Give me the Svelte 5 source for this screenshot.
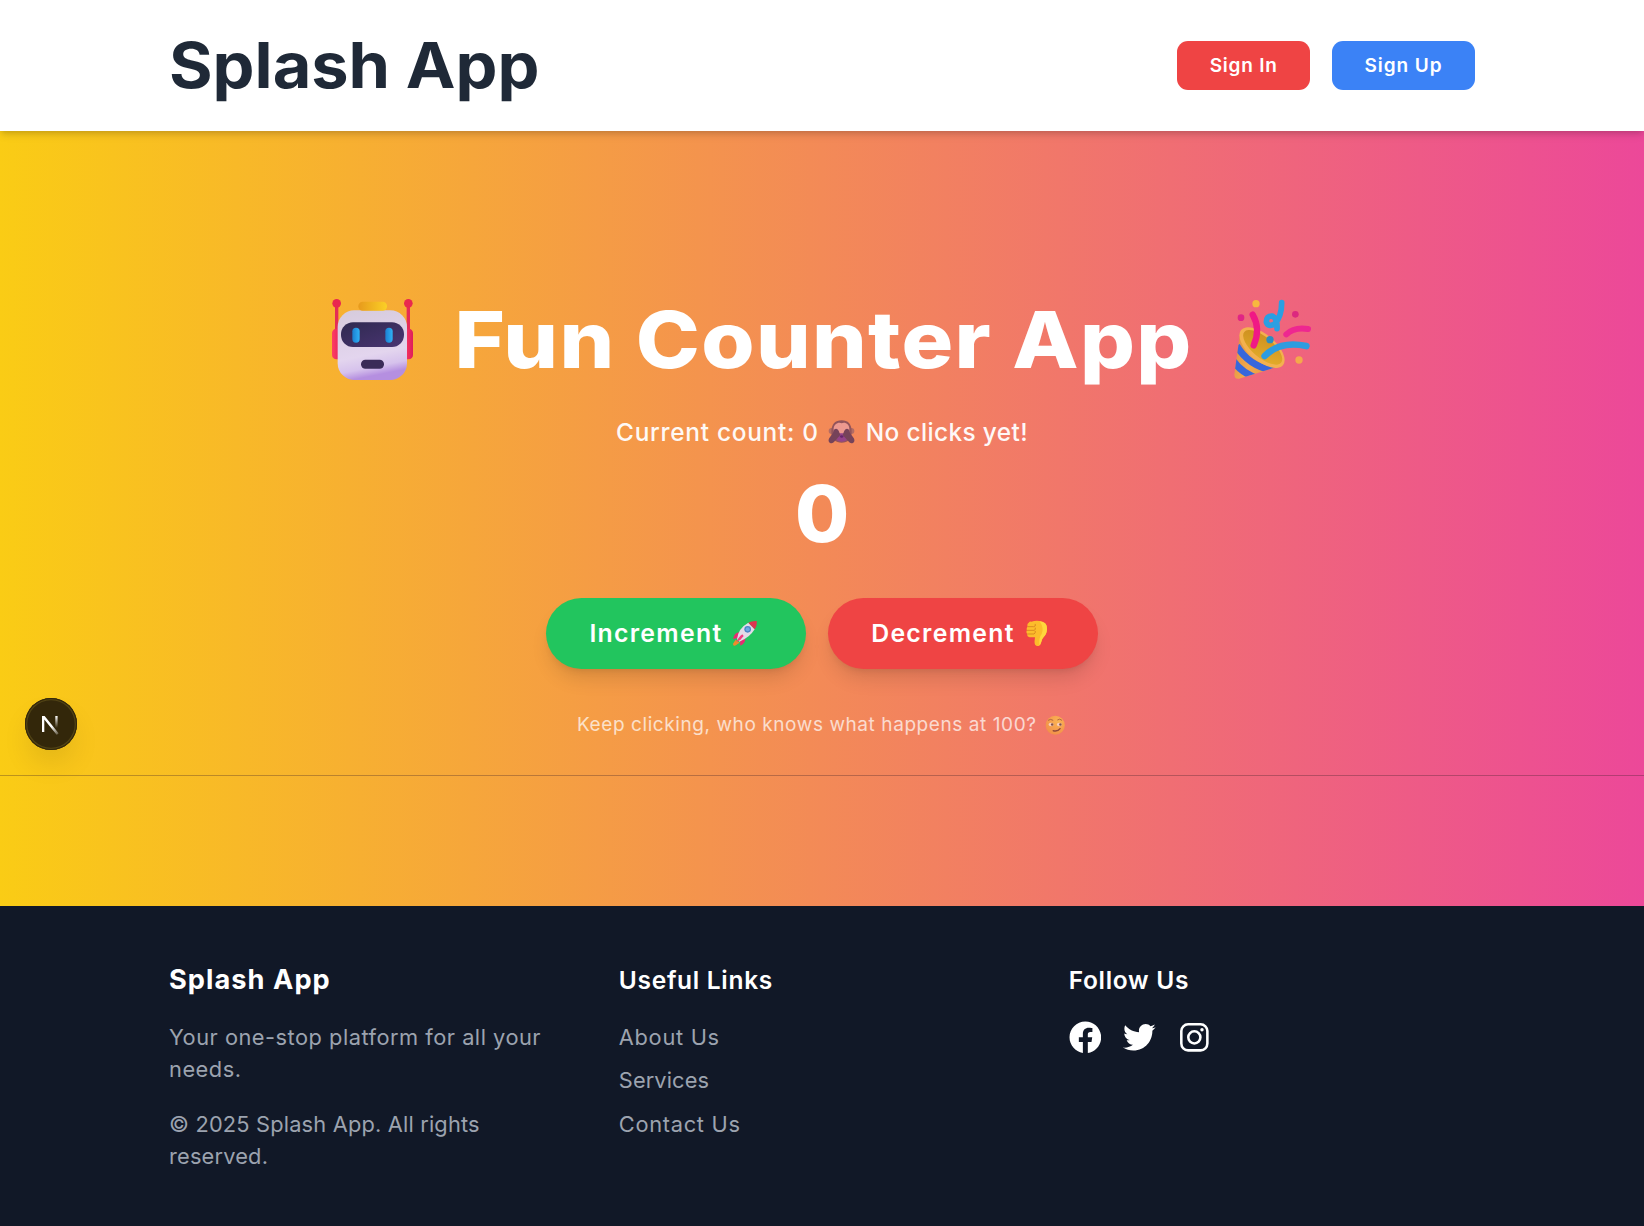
<script>
  let count = $state(0);
  const links = ['About Us', 'Services', 'Contact Us'];
</script>

<div class="page">
  <header>
    <div class="container bar">
      <div class="logo"><span>Splash App</span></div>
      <nav>
        <button class="sign in">Sign In</button>
        <button class="sign up">Sign Up</button>
      </nav>
    </div>
  </header>

  <main>
    <h1>
      <svg class="robot" viewBox="36 42 243 243" aria-label="robot">
        <defs>
          <linearGradient id="face" x1="0" y1="0" x2="0.2" y2="1">
            <stop offset="0" stop-color="#d6cbdc" /><stop offset="0.7" stop-color="#e3d5ee" /><stop offset="0.88" stop-color="#d6c2ec" /><stop offset="1" stop-color="#b58fe0" />
          </linearGradient>
          <linearGradient id="visor" x1="0" y1="0" x2="1" y2="1">
            <stop offset="0" stop-color="#2f2950" /><stop offset="1" stop-color="#4a3572" />
          </linearGradient>
          <linearGradient id="eye" x1="0" y1="0" x2="1" y2="0">
            <stop offset="0" stop-color="#1c7fd0" /><stop offset="1" stop-color="#2fb2f6" />
          </linearGradient>
          <linearGradient id="cap" x1="0" y1="0" x2="1" y2="0">
            <stop offset="0" stop-color="#e79a1c" /><stop offset="1" stop-color="#fbd026" />
          </linearGradient>
          <linearGradient id="ear" x1="0" y1="0" x2="1" y2="0">
            <stop offset="0" stop-color="#ff3f62" /><stop offset="1" stop-color="#de1d5b" />
          </linearGradient>
        </defs>
        <rect x="45" y="58" width="10" height="80" rx="3" fill="#e52c55" />
        <rect x="260" y="58" width="10" height="80" rx="3" fill="#e52c55" />
        <circle cx="50" cy="55" r="13" fill="#e9284f" />
        <circle cx="265" cy="55" r="13" fill="#e9284f" />
        <rect x="36" y="131" width="30" height="92" rx="13" fill="url(#ear)" />
        <rect x="249" y="131" width="30" height="92" rx="13" fill="url(#ear)" />
        <rect x="53" y="76" width="208" height="209" rx="50" fill="url(#face)" />
        <rect x="115" y="50" width="86" height="27" rx="13" fill="url(#cap)" />
        <rect x="63" y="112" width="189" height="74" rx="36" fill="url(#visor)" />
        <rect x="97" y="128" width="22" height="45" rx="11" fill="url(#eye)" />
        <rect x="196" y="128" width="22" height="45" rx="11" fill="url(#eye)" />
        <rect x="123" y="224" width="69" height="27" rx="13" fill="#3a2b58" />
      </svg>
      <span class="headline"><span>Fun Counter App</span></span>
      <svg class="party" viewBox="52 40 233 242" aria-label="party popper">
        <defs>
          <linearGradient id="cone" x1="0" y1="0" x2="1" y2="0.4">
            <stop offset="0" stop-color="#dc8a3e" /><stop offset="0.5" stop-color="#f2a94d" /><stop offset="1" stop-color="#e59a3c" />
          </linearGradient>
          <linearGradient id="mouth" x1="0" y1="0" x2="1" y2="1">
            <stop offset="0" stop-color="#c98b1d" /><stop offset="1" stop-color="#e7b02c" />
          </linearGradient>
          <clipPath id="coneclip"><path d="M70 145 L53 266 Q53 284 72 278 L198 238 L140 180Z" /></clipPath>
        </defs>
        <path d="M70 145 L53 266 Q53 284 72 278 L198 238 L140 180Z" fill="url(#cone)" />
        <g clip-path="url(#coneclip)" fill="none" stroke="#3767dc" stroke-width="21">
          <path d="M60 180 Q96 242 175 256" />
          <path d="M50 226 Q74 262 130 282" />
        </g>
        <ellipse cx="136" cy="186" rx="82" ry="40" transform="rotate(40 136 186)" fill="#f3b14f" />
        <ellipse cx="138" cy="185" rx="72" ry="31" transform="rotate(40 138 185)" fill="url(#mouth)" />
        <path d="M108 87 Q133 130 111 179" fill="none" stroke="#f01885" stroke-width="19" stroke-linecap="round" />
        <path d="M144 211 Q190 164 269 181" fill="none" stroke="#2d9ce0" stroke-width="20" stroke-linecap="round" />
        <path d="M209 146 Q233 123 274 130" fill="none" stroke="#ee2790" stroke-width="18" stroke-linecap="round" />
        <path d="M195 51 Q195 92 174 115 Q155 126 149 109 Q149 90 167 91 Q183 99 181 129" fill="none" stroke="#2b9fe2" stroke-width="17" stroke-linecap="round" stroke-linejoin="round" />
        <circle cx="118" cy="54" r="11" fill="#f7b83f" />
        <circle cx="73" cy="96" r="10" fill="#e02585" />
        <circle cx="236" cy="86" r="10" fill="#dc287f" />
        <circle cx="160" cy="162" r="11" fill="#2c8dc0" />
        <circle cx="247" cy="223" r="11" fill="#f4a94b" />
      </svg>
    </h1>

    <p class="status">
      <span class="current">Current count: {count}</span>
      <svg class="monkey" viewBox="0 0 81 72" aria-label="see-no-evil monkey">
        <circle cx="11" cy="33" r="9" fill="#b06a64" /><circle cx="70" cy="33" r="9" fill="#b06a64" />
        <path d="M10 36 C10 12 22 1 41 1 S71 12 71 36 C71 58 59 68 41 68 S10 58 10 36Z" fill="#8e525b" />
        <path d="M17 31 C15 8 36 5 41 10 C47 5 66 8 64 31 Q66 56 41 56 Q16 56 17 31Z" fill="#ec9a92" />
        <path d="M24 40 H57 L56 61 Q41 69 26 61Z" fill="#91418c" />
        <path d="M35 48 Q41 44 47 48 L45 52 Q41 55 37 52Z" fill="#5f226d" />
        <path d="M18 29 Q26 22 32 32 L37 45 L20 64 Q13 73 5 68 Q-1 63 4 54 L15 39Z" fill="#70405a" />
        <path d="M63 29 Q55 22 49 32 L44 45 L61 64 Q68 73 76 68 Q82 63 77 54 L66 39Z" fill="#70405a" />
      </svg>
      <span class="message">No clicks yet!</span>
    </p>

    <div class="count">{count}</div>

    <div class="actions">
      <button class="pill inc" onclick={() => count++}>
        <span>Increment</span>
        <svg viewBox="0 0 81 81" aria-label="rocket">
          <path d="M14 59 L6 71 Q5 78 12 77 L26 68Z" fill="#f08a2c" />
          <path d="M25 37 Q10 38 6 57 L22 54Z" fill="#e92a72" />
          <path d="M43 56 Q43 70 28 77 L27 59Z" fill="#e92a72" />
          <path d="M18 58 Q21 25 52 8 L71 28 Q56 53 25 65Z" fill="#e3dbe8" />
          <path d="M52 8 Q63 2 77 3 Q79 17 71 28Z" fill="#dd3550" />
          <circle cx="50" cy="28" r="10" fill="#4a86c6" /><circle cx="50" cy="28" r="6" fill="#6da9e2" />
          <path d="M34 43 Q24 49 16 66 Q31 60 38 48Z" fill="#f23d82" />
        </svg>
      </button>
      <button class="pill dec" onclick={() => count--}>
        <span>Decrement</span>
        <svg viewBox="0 0 81 81" aria-label="thumbs down">
          <path d="M25 5 Q42 -1 58 5 Q73 9 72 28 Q71 43 62 51 Q56 57 54 68 Q51 80 42 78 Q33 76 35 61 L36 52 H20 Q11 50 13 42 Q8 37 12 31 Q9 25 14 20 Q11 12 17 8 Q20 4 25 5Z" fill="#fcbc2b" />
          <path d="M50 4 Q73 6 72 28 Q71 43 62 51 Q56 57 54 68 Q52 74 49 76 Q47 53 56 42 Q64 25 50 4Z" fill="#ffd63d" />
          <path d="M16 20 H32 Q39 20 37 13 M13 31 H33 Q39 30 37 24 M14 42 H33 Q38 40 37 34" fill="none" stroke="#dc8b20" stroke-width="3" stroke-linecap="round" />
        </svg>
      </button>
    </div>

    <p class="note">
      <span>Keep clicking, who knows what happens at 100?</span>
      <svg viewBox="0 0 60 60" aria-label="smirking face">
        <defs>
          <radialGradient id="smirk" cx="0.65" cy="0.3" r="0.75">
            <stop offset="0" stop-color="#ffcf4b" /><stop offset="1" stop-color="#f39a3c" />
          </radialGradient>
        </defs>
        <circle cx="30" cy="30" r="28" fill="url(#smirk)" />
        <ellipse cx="18" cy="28" rx="7.5" ry="5" fill="#fff2dc" /><ellipse cx="42" cy="28" rx="7.5" ry="5" fill="#fff2dc" />
        <circle cx="21" cy="28" r="3.6" fill="#5c4539" /><circle cx="45" cy="28" r="3.6" fill="#5c4539" />
        <path d="M10 15 Q16 10 23 15 M37 14 Q43 9 49 15" fill="none" stroke="#8b532c" stroke-width="2.6" stroke-linecap="round" />
        <path d="M24 46 Q38 49 44 40" fill="none" stroke="#6b3424" stroke-width="4" stroke-linecap="round" />
      </svg>
    </p>

    <hr />

    <div class="badge">
      <svg viewBox="0 0 52 52" aria-label="Next.js">
        <defs>
          <linearGradient id="diag" x1="27" y1="28" x2="34" y2="37" gradientUnits="userSpaceOnUse">
            <stop offset="0" stop-color="#fff" /><stop offset="1" stop-color="#fff" stop-opacity="0.15" />
          </linearGradient>
          <linearGradient id="stem" x1="0" y1="18" x2="0" y2="30" gradientUnits="userSpaceOnUse">
            <stop offset="0" stop-color="#fff" /><stop offset="1" stop-color="#fff" stop-opacity="0" />
          </linearGradient>
        </defs>
        <path d="M17 18 H19.6 L33.6 35.2 Q32.8 36.2 31.6 36.8 L19.3 21.6 V34 H17Z" fill="url(#diag)" />
        <rect x="30.3" y="18" width="2.3" height="12.5" fill="url(#stem)" />
      </svg>
    </div>
  </main>

  <footer>
    <div class="container columns">
      <section class="about">
        <h3>Splash App</h3>
        <p class="tagline">Your one-stop platform for all your<br />needs.</p>
        <p class="copyright">© 2025 Splash App. All rights<br />reserved.</p>
      </section>
      <section>
        <h4>Useful Links</h4>
        <ul>
          {#each links as link}
            <li>{link}</li>
          {/each}
        </ul>
      </section>
      <section>
        <h4>Follow Us</h4>
        <div class="social">
          <svg viewBox="0 0 512 512" aria-label="Facebook"><path fill="currentColor" d="M504 256C504 119 393 8 256 8S8 119 8 256c0 123.78 90.69 226.38 209.25 245V327.69h-63V256h63v-54.64c0-62.15 37-96.48 93.67-96.48 27.14 0 55.52 4.84 55.52 4.84v61h-31.28c-30.8 0-40.41 19.12-40.41 38.73V256h68.78l-11 71.69h-57.78V501C413.31 482.38 504 379.78 504 256z" /></svg>
          <svg viewBox="0 0 512 512" aria-label="Twitter"><path fill="currentColor" d="M459.37 151.716c.325 4.548.325 9.097.325 13.645 0 138.72-105.583 298.558-298.558 298.558-59.452 0-114.68-17.219-161.137-47.106 8.447.974 16.568 1.299 25.34 1.299 49.055 0 94.213-16.568 130.274-44.832-46.132-.975-84.792-31.188-98.112-72.772 6.498.974 12.995 1.624 19.818 1.624 9.421 0 18.843-1.3 27.614-3.573-48.081-9.747-84.143-51.98-84.143-102.985v-1.299c13.969 7.797 30.214 12.67 47.431 13.319-28.264-18.843-46.781-51.005-46.781-87.391 0-19.492 5.197-37.36 14.294-52.954 51.655 63.675 129.3 105.258 216.365 109.807-1.624-7.797-2.599-15.918-2.599-24.04 0-57.828 46.782-104.934 104.934-104.934 30.213 0 57.502 12.67 76.67 33.137 23.715-4.548 46.456-13.32 66.599-25.34-7.798 24.366-24.366 44.833-46.132 57.827 21.117-2.273 41.584-8.122 60.426-16.243-14.292 20.791-32.161 39.308-52.628 54.253z" /></svg>
          <svg viewBox="0 0 512 512" aria-label="Instagram">
            <rect x="52" y="52" width="408" height="408" rx="106" fill="none" stroke="currentColor" stroke-width="40" />
            <circle cx="256" cy="256" r="95" fill="none" stroke="currentColor" stroke-width="40" />
            <circle cx="375.6" cy="136.4" r="26.8" fill="currentColor" />
          </svg>
        </div>
      </section>
    </div>
  </footer>
</div>

<style>
  :global(body) { margin: 0; background: #111827; }
  .page {
    min-height: 1226px;
    display: flex;
    flex-direction: column;
    font-family: Inter, 'Open Sans', sans-serif;
    overflow: hidden;
  }
  h1, h3, h4, p, ul { margin: 0; padding: 0; }
  ul { list-style: none; }
  span { white-space: nowrap; }
  button { border: 0; padding: 0; font-family: inherit; color: #fff; cursor: pointer; }
  .container { width: 1306px; margin: 0 auto; }

  header {
    position: relative;
    z-index: 1;
    height: 130.6px;
    background: #fff;
    box-shadow: 0 5px 8px -1px rgb(0 0 0 / 0.12), 0 3px 5px -2px rgb(0 0 0 / 0.12);
  }
  .bar { height: 100%; display: flex; align-items: center; justify-content: space-between; }
  .logo { font-size: 62.6px; font-weight: 700; letter-spacing: 0; line-height: 66px; color: #1f2937; }
  .logo span { display: inline-block; transform: scaleX(1.064); transform-origin: left; }
  nav { display: flex; gap: 21.8px; }
  .sign { height: 49px; border-radius: 11px; font-size: 19px; font-weight: 600; }
  .in { width: 133px; background: #ef4444; letter-spacing: 0.8px; }
  .up { width: 143px; background: #3b82f6; letter-spacing: 0.93px; }

  main {
    position: relative;
    height: 775.7px;
    box-sizing: border-box;
    padding-top: 168px;
    display: flex;
    flex-direction: column;
    align-items: center;
    color: #fff;
    background: linear-gradient(to right, #facc15, #ec4899);
  }
  h1 { width: 980px; height: 82px; display: flex; align-items: center; }
  .robot { width: 81px; height: 81px; flex: none; }
  .party { width: 77.7px; height: 80.7px; flex: none; }
  .headline { flex: 1; text-align: center; font-size: 78.4px; line-height: 82px; font-weight: 800; letter-spacing: 1.2px; }
  .headline span { display: inline-block; transform: scaleX(1.1); }
  .status { margin-top: 32.8px; height: 38px; display: flex; align-items: center; font-size: 24.4px; line-height: 38px; font-weight: 500; opacity: 0.95; }
  .current { letter-spacing: 0.72px; }
  .message { letter-spacing: 0.37px; }
  .monkey { width: 27px; height: 24px; margin: 0 10.3px 0 9.7px; }
  .count { margin-top: 21.6px; font-size: 78.4px; line-height: 82px; font-weight: 800; }
  .actions { margin-top: 43px; display: flex; gap: 21.8px; }
  .pill {
    height: 71px;
    display: flex;
    align-items: center;
    gap: 8.3px;
    padding-left: 43.3px;
    box-sizing: border-box;
    border-radius: 36px;
    font-size: 24.8px;
    font-weight: 600;
    letter-spacing: 1.3px;
    box-shadow: 0 13px 20px -4px rgb(0 0 0 / 0.12), 0 5px 8px -5px rgb(0 0 0 / 0.12);
  }
  .pill svg { width: 27px; height: 27px; }
  .inc { width: 260px; background: #22c55e; }
  .dec { width: 270px; background: #ef4444; }
  .note { margin-top: 42px; margin-right: 2px; height: 28px; display: flex; align-items: center; gap: 8px; font-size: 19px; line-height: 28px; letter-spacing: 0.58px; opacity: 0.7; }
  .note svg { width: 20.5px; height: 20.5px; }
  hr { width: 100%; height: 1px; margin: 36px 0 0; border: 0; background: rgb(60 30 40 / 0.32); }
  .badge {
    position: absolute;
    left: 25.3px;
    top: 567.6px;
    width: 52px;
    height: 52px;
    border-radius: 50%;
    background: #33270a;
    box-shadow: inset 0 0 0 1px #33270a, inset 0 0 0 2.3px #514315, 0 16px 32px -8px rgb(0 0 0 / 0.16);
  }
  .badge svg { display: block; width: 52px; height: 52px; }

  footer { flex: 1; padding-top: 54.4px; background: #111827; color: #fff; }
  .columns { display: grid; grid-template-columns: repeat(3, 1fr); column-gap: 43.5px; }
  h3, h4 { height: 38.1px; line-height: 38.1px; margin-bottom: 21.8px; }
  h3 { font-size: 27.2px; font-weight: 700; letter-spacing: 1.05px; }
  h4 { font-size: 24.5px; font-weight: 600; letter-spacing: 0.7px; }
  .about p, li { font-size: 21.8px; line-height: 32.67px; color: #9ca3af; white-space: nowrap; }
  .about .tagline { letter-spacing: 0.5px; margin-bottom: 21.8px; }
  .about .copyright { letter-spacing: 0.18px; }
  li { margin-bottom: 10.9px; letter-spacing: 0.7px; }
  li:nth-child(2) { letter-spacing: 0.1px; }
  .social { display: flex; gap: 21.8px; }
  .social svg { width: 32.7px; height: 32.7px; }
</style>
